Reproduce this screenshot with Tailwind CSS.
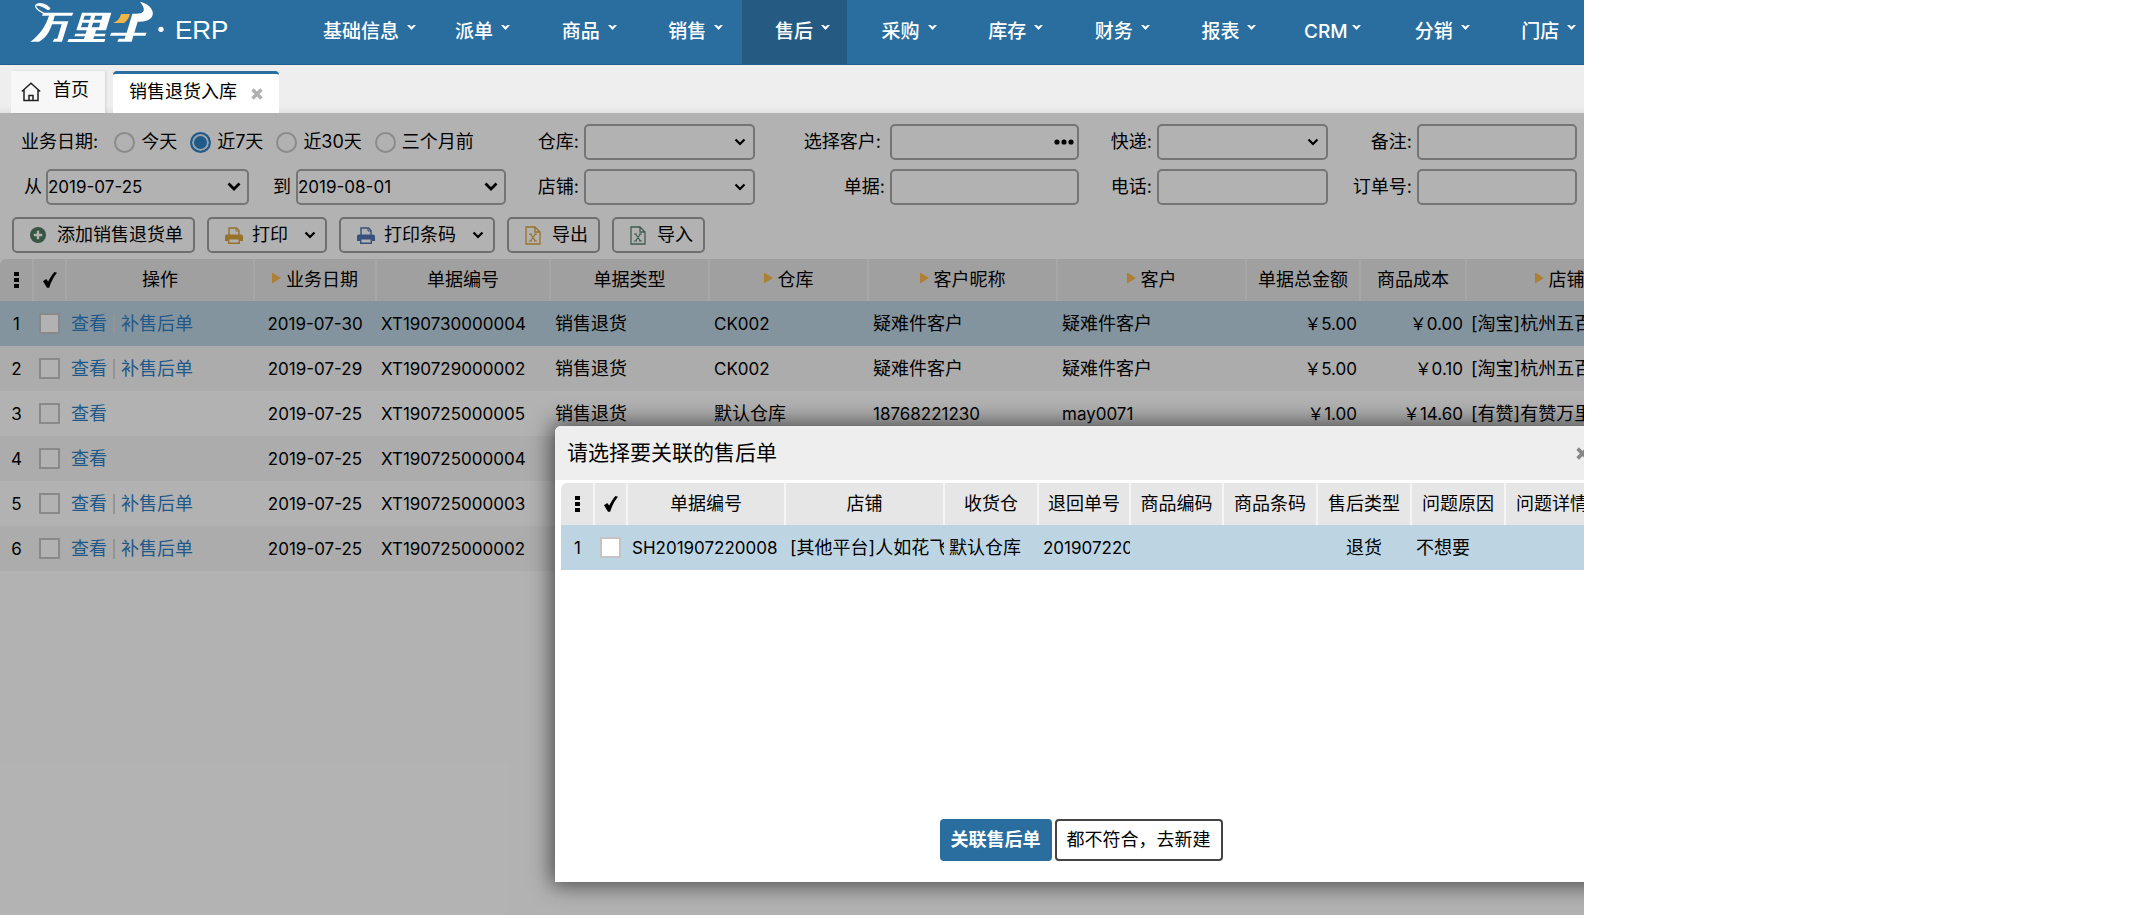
<!DOCTYPE html>
<html lang="zh-CN">
<head>
<meta charset="utf-8">
<meta name="viewport" content="width=device-width, initial-scale=1">
<title>万里牛 ERP - 销售退货入库</title>
<script src="https://cdn.jsdelivr.net/npm/@tailwindcss/browser@4"></script>
</head>
<body class="bg-white font-['Inter','Noto_Sans_CJK_SC',sans-serif] text-[18px] leading-6 text-black">
<svg class="hidden" aria-hidden="true">
  <symbol id="chev" viewBox="0 0 12 8"><path d="M1.5 1.5 6 6l4.500-4.500" fill="none" stroke="currentColor" stroke-width="2.200"/></symbol>
  <symbol id="check" viewBox="0 0 14 16"><path d="M0 9.200 3.200 7 5.200 9.500C7 6 9 2.500 11.500 0L14 .8C10.500 5 8 10 6.200 15.800H4z" fill="currentColor"/></symbol>
  <symbol id="dots" viewBox="0 0 5 17"><path d="M0 0h5v4H0zM0 6h5v4H0zM0 12h5v4H0z" fill="currentColor"/></symbol>
  <symbol id="tri" viewBox="0 0 10 12"><path d="M0 0 10 6 0 12z" fill="#f8b84c"/></symbol>
  <symbol id="cross" viewBox="0 0 12 12"><path d="M1.500 1.500l9 9M10.500 1.500l-9 9" stroke="currentColor" stroke-width="3.400" fill="none"/></symbol>
  <symbol id="caret" viewBox="0 0 9 5"><path d="M0 0h2.500l2 1.800L6.500 0H9L4.500 5z" fill="currentColor"/></symbol>
  <symbol id="printer" viewBox="0 0 18 17"><path d="M4 8V1h7.500L14 3.500V8" fill="none" stroke="currentColor" stroke-width="1.400"/><path d="M11 1v3h3" fill="none" stroke="currentColor" stroke-width="1"/><path d="M2 7.500h14a2 2 0 0 1 2 2V14h-3v-1.500H3V14H0V9.500a2 2 0 0 1 2-2z" fill="currentColor"/><path d="M3.700 12v4.200h10.600V12" fill="none" stroke="currentColor" stroke-width="1.400"/></symbol>
  <symbol id="sheet" viewBox="0 0 16 19"><path d="M1 1h9l5 5v12H1zM10 1v5h5" fill="none" stroke="currentColor" stroke-width="1.300"/><path d="M4 8h3M9 8h3M4 15h3M9 15h3M5.500 8l5 7M10.500 8l-5 7" fill="none" stroke="currentColor" stroke-width="1.200"/></symbol>
</svg>

<div class="relative flex min-h-screen w-full max-w-[1584px] flex-col overflow-hidden">
  <header class="flex h-[65px] shrink-0 border-b border-[#1f5f8f] bg-[#2a6ea0] text-white">
    <a href="#" class="flex w-[290px] shrink-0 items-start pl-7" aria-label="万里牛 ERP">
      <svg class="h-[44px] w-[136px] shrink-0" viewBox="84 0 408 132" fill="none" stroke="#fff">
        <path d="M150 26C138 12 120 9 111 13c-9 5-3 14 20 27" stroke-width="4"/>
        <path d="M111 13c10-3 26 2 40 14l-7 4C133 22 121 17 109 17z" fill="#fff" stroke="none"/>
        <path d="M130 38h90l-4 9h-90z" fill="#fff" stroke="none"/>
        <path d="M148 44h17c-10 38-22 68-48 81H91c28-20 46-46 57-81z" fill="#fff" stroke="none"/>
        <path d="M156 64h49l-19 61h-28l5-9h9l13-43h-32z" fill="#fff" stroke="none"/>
        <path d="M246 38h88l-16 53h-30l-3 10h32l-3 8h-32l-2 8h36l-3 9H202l4-9h46l3-8h-32l3-8h31l3-10h-31zM254 47l-4 12h20l3-12zM286 47l-4 12h22l3-12zM247 68l-4 14h20l4-14zM279 68l-4 14h22l4-14z" fill="#fff" fill-rule="evenodd" stroke="none"/>
        <path d="M339 69c14-5 20-12 24-27h27c-4 14-10 22-18 27z" fill="#f2b544" stroke="none"/>
        <path d="M397 41h12c25 0 30-12 11-36 32 7 48 33 33 49-9 9-23 12-40 11l-10 33h37l-4 9h-36l-5 18h-43l4-9h18l3-9h-47l4-9h46z" fill="#fff" stroke="none"/>
        <circle cx="483" cy="88" r="8" fill="#fff" stroke="none"/>
      </svg>
      <span class="pt-4 pl-[11px] font-['Liberation_Sans',sans-serif] text-[26px] leading-7">ERP</span>
    </a>
    <nav class="flex min-w-0 text-[19px] font-medium leading-[64px]">
      <a href="#" class="flex w-[132px] shrink-0 pl-[33px]">基础信息<svg class="mt-[25px] ml-2 h-[5px] w-[9px]"><use href="#caret"/></svg></a>
      <div class="grid w-[1171px] shrink-0 grid-cols-11 gap-x-0.5">
        <a href="#" class="flex pl-[33px]">派单<svg class="mt-[25px] ml-2 h-[5px] w-[9px]"><use href="#caret"/></svg></a>
        <a href="#" class="flex pl-[33px]">商品<svg class="mt-[25px] ml-2 h-[5px] w-[9px]"><use href="#caret"/></svg></a>
        <a href="#" class="flex pl-[33px]">销售<svg class="mt-[25px] ml-2 h-[5px] w-[9px]"><use href="#caret"/></svg></a>
        <a href="#" class="flex bg-[#255b82] pl-[33px]" aria-current="page">售后<svg class="mt-[25px] ml-2 h-[5px] w-[9px]"><use href="#caret"/></svg></a>
        <a href="#" class="flex pl-[33px]">采购<svg class="mt-[25px] ml-2 h-[5px] w-[9px]"><use href="#caret"/></svg></a>
        <a href="#" class="flex pl-[33px]">库存<svg class="mt-[25px] ml-2 h-[5px] w-[9px]"><use href="#caret"/></svg></a>
        <a href="#" class="flex pl-[33px]">财务<svg class="mt-[25px] ml-2 h-[5px] w-[9px]"><use href="#caret"/></svg></a>
        <a href="#" class="flex pl-[33px]">报表<svg class="mt-[25px] ml-2 h-[5px] w-[9px]"><use href="#caret"/></svg></a>
        <a href="#" class="flex pl-[29px]">CRM<svg class="mt-[25px] ml-1 h-[5px] w-[9px]"><use href="#caret"/></svg></a>
        <a href="#" class="flex pl-[33px]">分销<svg class="mt-[25px] ml-2 h-[5px] w-[9px]"><use href="#caret"/></svg></a>
        <a href="#" class="flex pl-[33px]">门店<svg class="mt-[25px] ml-2 h-[5px] w-[9px]"><use href="#caret"/></svg></a>
      </div>
    </nav>
  </header>

  <div class="flex h-12 shrink-0 items-end gap-2 bg-linear-to-b from-[#eeeeee] from-85% to-[#e2e2e2] pl-[11px]">
    <a href="#" class="flex h-[42px] w-[94px] items-center gap-3 bg-[#f7f7f7] pb-1 pl-[10px] shadow-[1px_0_2px_rgba(0,0,0,0.12)]">
      <svg class="mt-1 h-5 w-5" viewBox="0 0 20 20" fill="none" stroke="#222" stroke-width="1.500"><path d="M.8 9.500 10 1.200l9.200 8.300M3 8v10.500h14V8M8 18.500v-5h4v5"/></svg>
      首页
    </a>
    <div class="flex h-[42px] w-[166px] items-center justify-between rounded-t-sm border-t-3 border-[#2a6ea0] bg-white pr-4 pb-1 pl-4">
      <a href="#">销售退货入库</a>
      <button type="button" aria-label="关闭" class="text-[#b0b0b0]"><svg class="mt-1 h-3 w-3"><use href="#cross"/></svg></button>
    </div>
  </div>

  <main class="relative flex-1">
    <form class="grid grid-cols-[506px_249px_324px_249px_249px] gap-y-[9px] pt-[11px]">
      <fieldset class="flex h-[36px] items-center pl-[21px]">
        <span class="mr-4">业务日期:</span>
        <label class="flex items-center gap-[6px]"><input type="radio" name="range" class="h-[21px] w-[21px] appearance-none rounded-full border-2 border-[#c8c8c8] bg-white">今天</label>
        <label class="ml-[13px] flex items-center gap-[6px]"><input type="radio" name="range" checked class="h-[21px] w-[21px] appearance-none rounded-full border-2 border-[#2f82c4] bg-[#2f82c4] checked:shadow-[inset_0_0_0_2px_#dbeaf6]">近7天</label>
        <label class="ml-[13px] flex items-center gap-[6px]"><input type="radio" name="range" class="h-[21px] w-[21px] appearance-none rounded-full border-2 border-[#c8c8c8] bg-white">近30天</label>
        <label class="ml-[13px] flex items-center gap-[6px]"><input type="radio" name="range" class="h-[21px] w-[21px] appearance-none rounded-full border-2 border-[#c8c8c8] bg-white">三个月前</label>
      </fieldset>
      <div class="flex items-center justify-end gap-[5px]"><label for="wh">仓库:</label><span class="relative"><select id="wh" class="block h-[36px] w-[171px] appearance-none rounded-[5px] border-2 border-[#a8a8a8] bg-white"><option></option></select><svg class="pointer-events-none absolute top-[14px] right-[9px] h-2 w-3"><use href="#chev"/></svg></span></div>
      <div class="flex items-center justify-end gap-[9px]"><label for="cust">选择客户:</label><span class="relative"><input id="cust" class="block h-[36px] w-[189px] rounded-[5px] border-2 border-[#a8a8a8] bg-white px-1"><button type="button" aria-label="更多" class="absolute inset-y-0 right-[5px] flex items-center"><svg class="h-[6px] w-5" viewBox="0 0 20 6"><circle cx="3" cy="3" r="2.600"/><circle cx="10" cy="3" r="2.600"/><circle cx="17" cy="3" r="2.600"/></svg></button></span></div>
      <div class="flex items-center justify-end gap-[5px]"><label for="exp">快递:</label><span class="relative"><select id="exp" class="block h-[36px] w-[171px] appearance-none rounded-[5px] border-2 border-[#a8a8a8] bg-white"><option></option></select><svg class="pointer-events-none absolute top-[14px] right-[9px] h-2 w-3"><use href="#chev"/></svg></span></div>
      <div class="flex items-center justify-end gap-[5px]"><label for="memo">备注:</label><input id="memo" class="h-[36px] w-[160px] rounded-[5px] border-2 border-[#a8a8a8] bg-white px-1"></div>

      <div class="flex items-center pl-6">
        <label for="from" class="w-[22px]">从</label>
        <span class="relative"><select id="from" class="block h-[36px] w-[203px] appearance-none rounded-[5px] border-2 border-[#a8a8a8] bg-white text-[17px]"><option>2019-07-25</option></select><svg class="pointer-events-none absolute top-[13px] right-2 h-[9px] w-[14px]" viewBox="0 0 14 9"><path d="M1.500 1.500 7 7l5.500-5.500" fill="none" stroke="#000" stroke-width="2.800"/></svg></span>
        <label for="to" class="ml-6 w-[23px]">到</label>
        <span class="relative"><select id="to" class="block h-[36px] w-[210px] appearance-none rounded-[5px] border-2 border-[#a8a8a8] bg-white text-[17px]"><option>2019-08-01</option></select><svg class="pointer-events-none absolute top-[13px] right-2 h-[9px] w-[14px]" viewBox="0 0 14 9"><path d="M1.500 1.500 7 7l5.500-5.500" fill="none" stroke="#000" stroke-width="2.800"/></svg></span>
      </div>
      <div class="flex items-center justify-end gap-[5px]"><label for="shop">店铺:</label><span class="relative"><select id="shop" class="block h-[36px] w-[171px] appearance-none rounded-[5px] border-2 border-[#a8a8a8] bg-white"><option></option></select><svg class="pointer-events-none absolute top-[14px] right-[9px] h-2 w-3"><use href="#chev"/></svg></span></div>
      <div class="flex items-center justify-end gap-[5px]"><label for="bill">单据:</label><input id="bill" class="h-[36px] w-[189px] rounded-[5px] border-2 border-[#a8a8a8] bg-white px-1"></div>
      <div class="flex items-center justify-end gap-[5px]"><label for="tel">电话:</label><input id="tel" class="h-[36px] w-[171px] rounded-[5px] border-2 border-[#a8a8a8] bg-white px-1"></div>
      <div class="flex items-center justify-end gap-[5px]"><label for="order">订单号:</label><input id="order" class="h-[36px] w-[160px] rounded-[5px] border-2 border-[#a8a8a8] bg-white px-1"></div>
    </form>

    <div class="flex gap-3 pt-3 pl-3">
      <button type="button" class="flex h-[36px] w-[183px] items-center rounded-[5px] border-2 border-[#a0a0a0] pl-4"><svg class="mr-[11px] h-4 w-4" viewBox="0 0 16 16"><circle cx="8" cy="8" r="8" fill="#4f7a5f"/><path d="M8 3.800v8.400M3.800 8h8.400" stroke="#fff" stroke-width="2.400"/></svg>添加销售退货单</button>
      <button type="button" class="flex h-[36px] w-[120px] items-center rounded-[5px] border-2 border-[#a0a0a0] pl-4"><svg class="mr-[9px] h-[17px] w-[18px] text-[#d9a43e]"><use href="#printer"/></svg>打印<svg class="ml-4 h-2 w-3"><use href="#chev"/></svg></button>
      <button type="button" class="flex h-[36px] w-[156px] items-center rounded-[5px] border-2 border-[#a0a0a0] pl-4"><svg class="mr-[9px] h-[17px] w-[18px] text-[#4e74b0]"><use href="#printer"/></svg>打印条码<svg class="ml-4 h-2 w-3"><use href="#chev"/></svg></button>
      <button type="button" class="flex h-[36px] w-[93px] items-center rounded-[5px] border-2 border-[#a0a0a0] pl-4"><svg class="mr-[11px] h-[19px] w-4 text-[#d9a43e]"><use href="#sheet"/></svg>导出</button>
      <button type="button" class="flex h-[36px] w-[93px] items-center rounded-[5px] border-2 border-[#a0a0a0] pl-4"><svg class="mr-[11px] h-[19px] w-4 text-[#5c8570]"><use href="#sheet"/></svg>导入</button>
    </div>

    <div class="mt-[6px] overflow-hidden rounded-tl-md">
      <table class="w-[1653px] table-fixed border-collapse whitespace-nowrap">
        <colgroup><col class="w-[33px]"><col class="w-[33px]"><col class="w-[188px]"><col class="w-[122px]"><col class="w-[174px]"><col class="w-[159px]"><col class="w-[159px]"><col class="w-[189px]"><col class="w-[189px]"><col class="w-[114px]"><col class="w-[106px]"><col class="w-[187px]"></colgroup>
        <thead>
          <tr class="h-[42px] bg-[#e6e6e6] *:border-r-2 *:border-[#f0f0f0] *:p-0 *:font-normal">
            <th><svg class="mx-auto h-[17px] w-[5px]" role="img" aria-label="序号"><use href="#dots"/></svg></th>
            <th><svg class="mx-auto h-4 w-[14px]" role="img" aria-label="选择"><use href="#check"/></svg></th>
            <th>操作</th>
            <th><svg class="mr-[5px] mb-0.5 inline h-3 w-[9px] align-baseline"><use href="#tri"/></svg>业务日期</th>
            <th>单据编号</th>
            <th>单据类型</th>
            <th><svg class="mr-[5px] mb-0.5 inline h-3 w-[9px] align-baseline"><use href="#tri"/></svg>仓库</th>
            <th><svg class="mr-[5px] mb-0.5 inline h-3 w-[9px] align-baseline"><use href="#tri"/></svg>客户昵称</th>
            <th><svg class="mr-[5px] mb-0.5 inline h-3 w-[9px] align-baseline"><use href="#tri"/></svg>客户</th>
            <th>单据总金额</th>
            <th>商品成本</th>
            <th><svg class="mr-[5px] mb-0.5 inline h-3 w-[9px] align-baseline"><use href="#tri"/></svg>店铺</th>
          </tr>
        </thead>
        <tbody id="rows"></tbody>
      </table>
    </div>
    <div class="absolute inset-0 bg-black/30"></div>
  </main>

  <section role="dialog" aria-labelledby="dlg" class="absolute top-[426px] left-[555px] flex h-[456px] w-[1052px] flex-col rounded-t-md bg-white shadow-[0_0_22px_3px_rgba(0,0,0,0.6)]">
    <div class="flex h-[54px] shrink-0 items-center justify-between rounded-t-md bg-[#eeeeee] pr-[18px] pl-3">
      <h2 id="dlg" class="text-[21px]">请选择要关联的售后单</h2>
      <button type="button" aria-label="关闭" class="text-[#888]"><svg class="h-[13px] w-[13px]" viewBox="0 0 12 12"><use href="#cross"/></svg></button>
    </div>
    <div class="mt-[3px] ml-[6px] flex-1 overflow-hidden rounded-tl-md">
      <table class="w-[1038px] table-fixed border-collapse whitespace-nowrap">
        <colgroup><col class="w-[33px]"><col class="w-[33px]"><col class="w-[158px]"><col class="w-[159px]"><col class="w-[94px]"><col class="w-[92px]"><col class="w-[93px]"><col class="w-[94px]"><col class="w-[94px]"><col class="w-[94px]"><col class="w-[94px]"></colgroup>
        <thead>
          <tr class="h-[42px] bg-[#e6e6e6] *:border-r-2 *:border-[#f5f5f5] *:p-0 *:font-normal">
            <th><svg class="mx-auto h-[17px] w-[5px]" role="img" aria-label="序号"><use href="#dots"/></svg></th>
            <th><svg class="mx-auto h-4 w-[14px]" role="img" aria-label="选择"><use href="#check"/></svg></th>
            <th>单据编号</th><th>店铺</th><th>收货仓</th><th>退回单号</th><th>商品编码</th><th>商品条码</th><th>售后类型</th><th>问题原因</th><th>问题详情</th>
          </tr>
        </thead>
        <tbody>
          <tr class="h-[45px] bg-[#bdd5e3] *:overflow-hidden *:p-0">
            <td class="text-center text-[17px]">1</td>
            <td><input type="checkbox" aria-label="选择第1行" class="mx-auto block h-[21px] w-[21px] appearance-none border-2 border-[#c4c4c4] bg-white"></td>
            <td class="text-[17px]"><div class="pl-[5px]">SH201907220008</div></td>
            <td><div class="pl-[5px]">[其他平台]人如花飞</div></td>
            <td><div class="pl-[5px]">默认仓库</div></td>
            <td class="text-[17px]"><div class="pl-[5px]">201907220</div></td>
            <td></td><td></td>
            <td class="text-center">退货</td>
            <td><div class="pl-[5px]">不想要</div></td>
            <td></td>
          </tr>
        </tbody>
      </table>
    </div>
    <div class="mb-[21px] flex justify-center gap-[3px]">
      <button type="button" class="h-[42px] rounded-[4px] bg-[#2a6ea0] px-[11px] font-bold text-white">关联售后单</button>
      <button type="button" class="h-[42px] rounded-[4px] border-2 border-[#444] bg-white px-[10px]">都不符合，去新建</button>
    </div>
  </section>
</div>

<script>
  const data = [
    ['2019-07-30', 'XT190730000004', '销售退货', 'CK002', '疑难件客户', '疑难件客户', '￥5.00', '￥0.00', '[淘宝]杭州五百', true],
    ['2019-07-29', 'XT190729000002', '销售退货', 'CK002', '疑难件客户', '疑难件客户', '￥5.00', '￥0.10', '[淘宝]杭州五百', true],
    ['2019-07-25', 'XT190725000005', '销售退货', '默认仓库', '18768221230', 'may0071', '￥1.00', '￥14.60', '[有赞]有赞万里', false],
    ['2019-07-25', 'XT190725000004', '', '', '', '', '', '', '', false],
    ['2019-07-25', 'XT190725000003', '', '', '', '', '', '', '', true],
    ['2019-07-25', 'XT190725000002', '', '', '', '', '', '', '', true]
  ];
  const latin = s => /[\u4e00-\u9fff]/.test(s) ? '' : 'text-[17px]';
  document.getElementById('rows').innerHTML = data.map((r, i) => `
    <tr class="h-[45px] ${i === 0 ? 'bg-[#bdd5e3]' : i % 2 ? 'bg-[#f6f6f6]' : 'bg-white'} *:overflow-hidden *:p-0">
      <td class="text-center text-[17px]">${i + 1}</td>
      <td><input type="checkbox" aria-label="选择第${i + 1}行" class="mx-auto block h-[21px] w-[21px] appearance-none border-2 border-[#c4c4c4] bg-white"></td>
      <td><div class="flex items-center pl-[5px] text-[#2f7fc4]"><a href="#">查看</a>${r[9] ? '<span class="mx-[6px] h-5 w-0.5 bg-[#d4d4d4]"></span><a href="#">补售后单</a>' : ''}</div></td>
      <td class="text-center text-[17px]">${r[0]}</td>
      <td class="text-[17px]"><div class="pl-[5px]">${r[1]}</div></td>
      <td><div class="pl-[5px]">${r[2]}</div></td>
      <td class="${latin(r[3])}"><div class="pl-[5px]">${r[3]}</div></td>
      <td class="${latin(r[4])}"><div class="pl-[5px]">${r[4]}</div></td>
      <td class="${latin(r[5])}"><div class="pl-[5px]">${r[5]}</div></td>
      <td class="text-right text-[17px]"><div class="pr-[3px]">${r[6]}</div></td>
      <td class="text-right text-[17px]"><div class="pr-[3px]">${r[7]}</div></td>
      <td><div class="pl-[5px]">${r[8]}</div></td>
    </tr>`).join('');
</script>
</body>
</html>
